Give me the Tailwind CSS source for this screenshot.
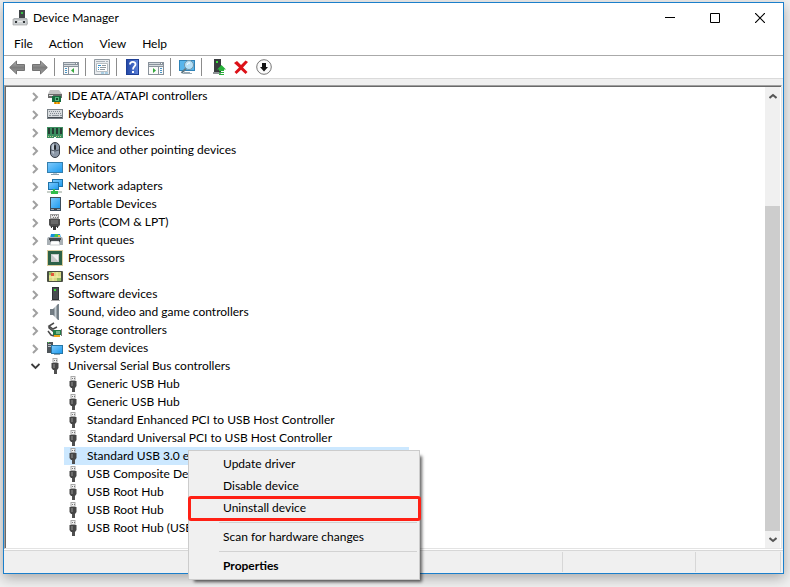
<!DOCTYPE html>
<html lang="en">
<head>
<meta charset="utf-8">
<title>Device Manager</title>
<script src="https://cdn.jsdelivr.net/npm/@tailwindcss/browser@4"></script>
</head>
<body class="h-screen overflow-hidden bg-[#f0f0f0] pt-[2px] pr-[6px] pb-[13px] pl-[3px] font-['Lato','Open_Sans',sans-serif] text-[12px] leading-[18px] text-black">

<svg class="absolute size-0" aria-hidden="true">
  <defs>
    <linearGradient id="blue" x1="0" y1="0" x2="1" y2="1"><stop offset="0" stop-color="#7cc8fb"/><stop offset="1" stop-color="#1e9cf0"/></linearGradient>
    <linearGradient id="arrow" x1="0" y1="0" x2="0" y2="1"><stop offset="0" stop-color="#b5b5b5"/><stop offset=".5" stop-color="#7d7d7d"/><stop offset="1" stop-color="#a2a2a2"/></linearGradient>
    <linearGradient id="steel" x1="0" y1="0" x2="1" y2="0"><stop offset="0" stop-color="#59636b"/><stop offset=".5" stop-color="#c3ccd2"/><stop offset="1" stop-color="#5e686f"/></linearGradient>
    <linearGradient id="help" x1="0" y1="0" x2="1" y2="0"><stop offset="0" stop-color="#2449a8"/><stop offset="1" stop-color="#5b80d8"/></linearGradient>
    <symbol id="chevron" viewBox="0 0 8 12"><path d="M2 2l4 4-4 4" fill="none" stroke="#a0a0a0" stroke-width="2"/></symbol>
    <symbol id="usb" viewBox="0 0 16 16">
      <path d="M5.500 0h5v5h-5z" fill="#a9a9a9"/><path d="M6.500 1h3v3h-3z" fill="#f2f2f2"/><path d="M7 2h1v1H7zM9 2h1v1H9z" fill="#777"/>
      <path d="M4.500 5h7v5l-1.500 2H6l-1.500-2z" fill="#464646"/><path d="M6 6h2v4H6z" fill="#6e6e6e"/><path d="M7 12h3v4H7z" fill="#505050"/>
    </symbol>
    <symbol id="ide" viewBox="0 0 16 16">
      <path d="M3 1h9l3 4H1z" fill="#c4c4c4"/><path d="M1 5h14v4H1z" fill="#6b6b6b"/><path d="M2 6h4v1H2z" fill="#ddd"/>
      <path d="M5 7h9v6H5z" fill="#156b3d"/><path d="M8 8h4v4H8z" fill="#55b77d"/><path d="M9 9h2v2H9z" fill="#164b2d"/><path d="M7 13h6v2H7z" fill="#f0ac14"/><path d="M8 13h1v2H8zM11 13h1v2h-1z" fill="#dc7900"/>
    </symbol>
    <symbol id="keyboard" viewBox="0 0 16 16">
      <path d="M0 3h16v10H0z" fill="#7a8288"/><path d="M1 4h14v7H1z" fill="#d8dcdf"/><path d="M1 11h14v1H1z" fill="#454b51"/>
      <path d="M2 5.500h12M3 7.500h12" stroke="#838b92" stroke-dasharray="1 1"/><path d="M2 9.500h2m1 0h7m1 0h2" stroke="#8d959b"/>
    </symbol>
    <symbol id="memory" viewBox="0 0 16 16">
      <path d="M0 3h16v11H9v-1H7v1H0z" fill="#3c8f60"/><path d="M1 4h2v6H1zM5 4h2v6H5zM9 4h2v6H9zM13 4h2v6h-2z" fill="#263e34"/><path d="M1 12.500h5m3 0h6" stroke="#c0c98a" stroke-dasharray="1 1"/>
    </symbol>
    <symbol id="mouse" viewBox="0 0 16 16"><rect x="3.500" y=".5" width="9" height="15" rx="4.500" fill="#8d99a8" stroke="#343a42"/><path d="M5 5q0-3 2-3v10q-2-1-2-4z" fill="#c3ccd6"/><path d="M8 1v4M4 8q4 2 8 0" fill="none" stroke="#4c5560"/><rect x="7" y="3" width="2" height="5" rx="1" fill="#23282e"/></symbol>
    <symbol id="monitor" viewBox="0 0 16 16"><path d="M0 2h16v11H0z" fill="#347fae"/><path d="M1 3h14v9H1z" fill="url(#blue)"/><path d="M6 13h4v1H6z" fill="#bccbd4"/><path d="M4 14h8v1H4z" fill="#8ba1b0"/></symbol>
    <symbol id="network" viewBox="0 0 16 16"><path d="M5 1h11v8H5z" fill="#1e72a8"/><path d="M6 2h9v6H6z" fill="url(#blue)"/><path d="M1 4h11v8H1z" fill="#1e72a8"/><path d="M2 5h9v6H2z" fill="url(#blue)"/><path d="M0 13h15v2H0z" fill="#c8cfc9"/><path d="M6 11h2v2h3v3H4v-3h2z" fill="#30bd4b"/></symbol>
    <symbol id="portable" viewBox="0 0 16 16"><path d="M3 1h11v14H3z" fill="#3d4e5c"/><path d="M4 2h9v10H4z" fill="url(#blue)"/><path d="M4 13h9v1H4z" fill="#9aa7b1"/><path d="M7 13h3v1H7z" fill="#444"/></symbol>
    <symbol id="port" viewBox="0 0 16 16"><path d="M3 0h9v5H3z" fill="#9e9e9e"/><path d="M4 1h7v3H4z" fill="#e4e4e4"/><path d="M5 1.500h6M6 3.500h5" stroke="#777" stroke-dasharray="1 1"/><path d="M2 5h11v6l-2 2H4l-2-2z" fill="#4e4e4e"/><path d="M4 7h7M4 9h7" stroke="#848484"/><path d="M4 12h1v2H4zM6 12h3v4H6zM10 12h1v2h-1z" fill="#383838"/></symbol>
    <symbol id="printer" viewBox="0 0 16 16"><path d="M4 2h9l1 4H3z" fill="#1590dd"/><path d="M8 2h3v3H7z" fill="#45c64d"/><path d="M11 3h2v2h-2z" fill="#f0c03a"/><path d="M1 5h14l1 2v6H0V7z" fill="#a9b0b5"/><path d="M2 6h12v2H2z" fill="#454b50"/><path d="M3 8h10v2H3z" fill="#292e32"/><path d="M4 9h8l1 4H3z" fill="#fff" stroke="#9ba1a5" stroke-width=".5"/></symbol>
    <symbol id="processor" viewBox="0 0 16 16"><rect x=".5" y=".5" width="15" height="15" fill="none" stroke="#b89c3c" stroke-dasharray="1 1"/><path d="M1 1h14v14H1z" fill="#2d6147"/><path d="M4 4h8v8H4z" fill="#c8c8c8"/><path d="M5 5h6v6z" fill="#f1f1f1"/></symbol>
    <symbol id="sensor" viewBox="0 0 16 16"><rect y="3" width="16" height="11" rx="1" fill="#4b5043"/><path d="M2 4h12v9H2z" fill="#d8dc86"/><path d="M2 4h4v3H2zM10 10h4v3h-4z" fill="#93bd64"/><path d="M6 4v9M2 9h12M10 4v5" stroke="#f9efac"/><path d="M4 5h3v3H4z" fill="#e4583b"/></symbol>
    <symbol id="software" viewBox="0 0 16 16"><path d="M5 1h7v13H5z" fill="#303336"/><path d="M6 2h5v11H6z" fill="#484c50"/><path d="M7 3h2v2H7z" fill="#3dde3c"/><path d="M4 14h9v1H4z" fill="#a5a5a5"/></symbol>
    <symbol id="sound" viewBox="0 0 16 16"><path d="M3 5h3v6H3z" fill="#737d84"/><path d="M6 5l5-5v16l-5-5z" fill="url(#steel)"/><path d="M11.500 0v16" stroke="#78848c"/></symbol>
    <symbol id="storage" viewBox="0 0 16 16"><path d="M7 1L2 4l4 3 4-2M2 4v2l5 4M1 9l3 4 3 1" fill="none" stroke="#4b4b4b" stroke-width="1.500"/><path d="M6 8h9v5H6z" fill="#247b47"/><path d="M9 9h4v3H9z" fill="#74b78d"/><path d="M14 7h1v7h-1z" fill="#777"/><path d="M7 13h6v2H7z" fill="#eba51c"/></symbol>
    <symbol id="system" viewBox="0 0 16 16"><path d="M0 2h6v11H0z" fill="#4f555a"/><path d="M1 4h3v1H1zM1 6h3v1H1z" fill="#b8bfc4"/><path d="M1 2h1v1H1z" fill="#44df45"/><path d="M4 5h12v9H4z" fill="#2676a6"/><path d="M5 6h10v7H5z" fill="url(#blue)"/><path d="M7 14h6v1H7z" fill="#93a3ae"/></symbol>
  </defs>
</svg>

<main class="flex h-full flex-col border border-[#1b7fcb] bg-white shadow-[0_4px_12px_rgba(0,0,0,0.3)]">
  <header class="flex h-[30px] shrink-0 items-center pl-2">
    <svg class="size-4" viewBox="0 0 16 16"><path d="M7 0h6v9H7z" fill="#3f4346"/><path d="M9 2h2v2H9z" fill="#37bf44"/><path d="M2 8h13l1 6H1z" fill="#b9bfc3"/><path d="M1 9h14v6H1z" fill="#ced2d4" stroke="#999" stroke-width=".6"/><path d="M3 11h2v2H3zM11 11h2v2h-2z" fill="#34383b"/><path d="M6 11h4v1H6z" fill="#eee"/></svg>
    <h1 class="pl-[5px]">Device Manager</h1>
    <div class="ml-auto flex pr-[1px]">
      <button class="flex h-7 w-[45px] items-center justify-center" aria-label="Minimize"><svg class="size-[10px]" viewBox="0 0 10 10"><path d="M0 4.500h10" stroke="#000"/></svg></button>
      <button class="flex h-7 w-[45px] items-center justify-center" aria-label="Maximize"><svg class="size-[10px]" viewBox="0 0 10 10"><path d="M.5.500h9v9h-9z" fill="none" stroke="#000"/></svg></button>
      <button class="flex h-7 w-[45px] items-center justify-center" aria-label="Close"><svg class="size-[10px]" viewBox="0 0 10 10"><path d="M0 0l10 10M10 0L0 10" stroke="#000" stroke-width="1.200"/></svg></button>
    </div>
  </header>

  <nav class="flex h-[23px] shrink-0 items-center gap-4 border-b border-[#aaa] pl-[10px]" aria-label="Menu bar">
    <button>File</button><button>Action</button><button>View</button><button>Help</button>
  </nav>

  <div class="flex h-[23px] shrink-0 items-center border-b border-[#dadada] pl-[5px]" role="toolbar" aria-label="Tools">
    <button aria-label="Back"><svg class="size-4" viewBox="0 0 16 16"><path d="M.700 8.500L7.500 2v3.500h8v6h-8V15z" fill="url(#arrow)" stroke="#737373"/></svg></button>
    <button class="ml-[7px]" aria-label="Forward"><svg class="size-4" viewBox="0 0 16 16"><path d="M15.300 8.500L8.500 2v3.500h-8v6h8V15z" fill="url(#arrow)" stroke="#737373"/></svg></button>
    <span class="ml-[6px] h-[18px] w-px bg-[#8c8c8c]"></span>
    <button class="ml-2" aria-label="Show or hide console tree"><svg class="size-4" viewBox="0 0 16 16"><path d="M0 3h16v13H0z" fill="#89929b"/><path d="M1 4h11v1H1zM1 6h14v1H1z" fill="#d5dade"/><path d="M13 4h1v1h-1z" fill="#fff"/><path d="M1 8h4v7H1zM6 8h9v7H6z" fill="#fafafa"/><path d="M2 9.500h2M2 11.500h2M2 13.500h2" stroke="#4994c4"/><path d="M11 9v5l-3-2.500z" fill="#35a83b"/></svg></button>
    <span class="ml-[6px] h-[18px] w-px bg-[#8c8c8c]"></span>
    <button class="ml-2" aria-label="Properties"><svg class="size-4" viewBox="0 0 16 16"><path d="M.5.500h15v15H.5z" fill="#e9ecef" stroke="#929aa1"/><path d="M2 2.500h9M12 2.500h2" stroke="#a9b2ba"/><path d="M2.500 4.500h11v8h-11z" fill="#fff" stroke="#b8bec2"/><path d="M4 6.500h3M4 8.500h1M4 10.500h1" stroke="#3293cf"/><path d="M8 6.500h4M6 8.500h6M6 10.500h5" stroke="#8f989f"/><path d="M7 14h3M11 14h3" stroke="#6cb1d9"/></svg></button>
    <span class="ml-[6px] h-[18px] w-px bg-[#8c8c8c]"></span>
    <button class="ml-2" aria-label="Help"><svg class="size-4" viewBox="0 0 16 16"><path d="M1 0h13v16H1z" fill="#1e3f95"/><path d="M2 1h11v14H2z" fill="url(#help)"/><path d="M5 5.500c0-3.500 5.500-3.500 5.500-.2C10.500 7.500 8 7.500 8 10.500" fill="none" stroke="#fff" stroke-width="1.800"/><path d="M7 12h2v2H7z" fill="#fff"/></svg></button>
    <button class="ml-[7px]" aria-label="Show or hide action pane"><svg class="size-4" viewBox="0 0 16 16"><path d="M0 3h16v13H0z" fill="#89929b"/><path d="M1 4h11v1H1zM1 6h14v1H1z" fill="#d5dade"/><path d="M13 4h1v1h-1z" fill="#fff"/><path d="M1 8h9v7H1zM11 8h4v7h-4z" fill="#fafafa"/><path d="M12 9.500h2M12 11.500h2M12 13.500h2" stroke="#4994c4"/><path d="M5 9v5l3-2.500z" fill="#35a83b"/></svg></button>
    <span class="ml-[6px] h-[18px] w-px bg-[#8c8c8c]"></span>
    <button class="ml-2" aria-label="Scan for hardware changes"><svg class="size-4" viewBox="0 0 16 16"><path d="M0 1h16v11H0z" fill="#2f83b8"/><path d="M1 2h14v9H1z" fill="#58b5eb"/><path d="M5 13h6v1H5zM4 14h9v1H4z" fill="#9aaab4"/><path d="M7 9.500L2.500 14" stroke="#607884" stroke-width="2"/><circle cx="10" cy="6" r="4.500" fill="#b5e0f7" stroke="#7195a8"/><path d="M8 6q1-3 3-2" fill="none" stroke="#fff"/></svg></button>
    <span class="ml-[6px] h-[18px] w-px bg-[#8c8c8c]"></span>
    <button class="ml-[9px]" aria-label="Update driver"><svg class="size-4" viewBox="0 0 16 16"><path d="M3 0h7v13H3z" fill="#383b3e"/><path d="M5 2h2v2H5z" fill="#3ce13d"/><path d="M2 13h8v2H2z" fill="#8e9396"/><path d="M10.500 6l4.500 4.500h-2V12H8v-1.500H6z" fill="#27b139"/><path d="M8 13h5v1H8zM8 15h5v1H8z" fill="#27b139"/></svg></button>
    <button class="ml-[6px]" aria-label="Uninstall device"><svg class="size-4" viewBox="0 0 16 16"><path d="M1 4l3-2 4 4 4.500-4.500L15 3l-5 5.500 4.500 4.500-2 2L8 10.800 3.500 15l-2-2L6 8.500z" fill="#dc1118"/></svg></button>
    <button class="ml-[7px]" aria-label="Disable device"><svg class="size-4" viewBox="0 0 16 16"><circle cx="8" cy="8" r="7.300" fill="#fafafa" stroke="#777"/><path d="M6 4h4v4h2l-4 4.500L4 8h2z" fill="#111"/></svg></button>
  </div>

  <section class="flex min-h-0 flex-1 flex-col bg-[#f0f0f0] pt-[6px]">
   <div class="mr-px flex min-h-0 flex-1 border-t border-r border-b border-l border-t-[#a0a0a0] border-r-[#e3e3e3] border-b-[#e3e3e3] border-l-[#a0a0a0] bg-white">
    <div class="flex min-w-0 flex-1 border-t border-l border-[#696969] pr-px">
      <ul class="min-w-0 flex-1 overflow-hidden" role="tree" aria-label="Devices">
        <li class="flex h-[18px] items-center pl-[25px]" role="treeitem"><svg class="mt-[2px] h-3 w-2"><use href="#chevron"/></svg><svg class="mt-[2px] mr-[5px] ml-2 size-4"><use href="#ide"/></svg>IDE ATA/ATAPI controllers</li>
        <li class="flex h-[18px] items-center pl-[25px]" role="treeitem"><svg class="mt-[2px] h-3 w-2"><use href="#chevron"/></svg><svg class="mr-[5px] ml-2 size-4"><use href="#keyboard"/></svg>Keyboards</li>
        <li class="flex h-[18px] items-center pl-[25px]" role="treeitem"><svg class="mt-[2px] h-3 w-2"><use href="#chevron"/></svg><svg class="mr-[5px] ml-2 size-4"><use href="#memory"/></svg>Memory devices</li>
        <li class="flex h-[18px] items-center pl-[25px]" role="treeitem"><svg class="mt-[2px] h-3 w-2"><use href="#chevron"/></svg><svg class="mr-[5px] ml-2 size-4"><use href="#mouse"/></svg>Mice and other pointing devices</li>
        <li class="flex h-[18px] items-center pl-[25px]" role="treeitem"><svg class="mt-[2px] h-3 w-2"><use href="#chevron"/></svg><svg class="mr-[5px] ml-2 size-4"><use href="#monitor"/></svg>Monitors</li>
        <li class="flex h-[18px] items-center pl-[25px]" role="treeitem"><svg class="mt-[2px] h-3 w-2"><use href="#chevron"/></svg><svg class="mr-[5px] ml-2 size-4"><use href="#network"/></svg>Network adapters</li>
        <li class="flex h-[18px] items-center pl-[25px]" role="treeitem"><svg class="mt-[2px] h-3 w-2"><use href="#chevron"/></svg><svg class="mr-[5px] ml-2 size-4"><use href="#portable"/></svg>Portable Devices</li>
        <li class="flex h-[18px] items-center pl-[25px]" role="treeitem"><svg class="mt-[2px] h-3 w-2"><use href="#chevron"/></svg><svg class="mr-[5px] ml-2 size-4"><use href="#port"/></svg>Ports (COM &amp; LPT)</li>
        <li class="flex h-[18px] items-center pl-[25px]" role="treeitem"><svg class="mt-[2px] h-3 w-2"><use href="#chevron"/></svg><svg class="mr-[5px] ml-2 size-4"><use href="#printer"/></svg>Print queues</li>
        <li class="flex h-[18px] items-center pl-[25px]" role="treeitem"><svg class="mt-[2px] h-3 w-2"><use href="#chevron"/></svg><svg class="mr-[5px] ml-2 size-4"><use href="#processor"/></svg>Processors</li>
        <li class="flex h-[18px] items-center pl-[25px]" role="treeitem"><svg class="mt-[2px] h-3 w-2"><use href="#chevron"/></svg><svg class="mr-[5px] ml-2 size-4"><use href="#sensor"/></svg>Sensors</li>
        <li class="flex h-[18px] items-center pl-[25px]" role="treeitem"><svg class="mt-[2px] h-3 w-2"><use href="#chevron"/></svg><svg class="mr-[5px] ml-2 size-4"><use href="#software"/></svg>Software devices</li>
        <li class="flex h-[18px] items-center pl-[25px]" role="treeitem"><svg class="mt-[2px] h-3 w-2"><use href="#chevron"/></svg><svg class="mr-[5px] ml-2 size-4"><use href="#sound"/></svg>Sound, video and game controllers</li>
        <li class="flex h-[18px] items-center pl-[25px]" role="treeitem"><svg class="mt-[2px] h-3 w-2"><use href="#chevron"/></svg><svg class="mr-[5px] ml-2 size-4"><use href="#storage"/></svg>Storage controllers</li>
        <li class="flex h-[18px] items-center pl-[25px]" role="treeitem"><svg class="mt-[2px] h-3 w-2"><use href="#chevron"/></svg><svg class="mr-[5px] ml-2 size-4"><use href="#system"/></svg>System devices</li>
        <li role="treeitem" aria-expanded="true">
          <div class="flex h-[18px] items-center pl-6"><svg class="h-2 w-[10px]" viewBox="0 0 10 8"><path d="M1.500 2l4 4 4-4" fill="none" stroke="#3c3c3c" stroke-width="1.800"/></svg><svg class="mr-[5px] ml-[7px] size-4"><use href="#usb"/></svg>Universal Serial Bus controllers</div>
          <ul class="w-[403px] pl-[58px]" role="group">
            <li class="flex h-[18px] items-center" role="treeitem"><svg class="mr-[6px] ml-px size-4"><use href="#usb"/></svg>Generic USB Hub</li>
            <li class="flex h-[18px] items-center" role="treeitem"><svg class="mr-[6px] ml-px size-4"><use href="#usb"/></svg>Generic USB Hub</li>
            <li class="flex h-[18px] items-center" role="treeitem"><svg class="mr-[6px] ml-px size-4"><use href="#usb"/></svg>Standard Enhanced PCI to USB Host Controller</li>
            <li class="flex h-[18px] items-center" role="treeitem"><svg class="mr-[6px] ml-px size-4"><use href="#usb"/></svg>Standard Universal PCI to USB Host Controller</li>
            <li class="flex h-[18px] items-center bg-[#cce8ff]" role="treeitem" aria-selected="true"><svg class="mr-[6px] ml-px size-4"><use href="#usb"/></svg>Standard USB 3.0 eX</li>
            <li class="flex h-[18px] items-center" role="treeitem"><svg class="mr-[6px] ml-px size-4"><use href="#usb"/></svg>USB Composite Dev</li>
            <li class="flex h-[18px] items-center" role="treeitem"><svg class="mr-[6px] ml-px size-4"><use href="#usb"/></svg>USB Root Hub</li>
            <li class="flex h-[18px] items-center" role="treeitem"><svg class="mr-[6px] ml-px size-4"><use href="#usb"/></svg>USB Root Hub</li>
            <li class="flex h-[18px] items-center" role="treeitem"><svg class="mr-[6px] ml-px size-4"><use href="#usb"/></svg>USB Root Hub (USB</li>
          </ul>
        </li>
      </ul>
      <div class="flex w-[15px] flex-col bg-[#f0f0f0]">
        <button class="flex h-[17px] items-center justify-center" aria-label="Scroll up"><svg class="h-[6px] w-2" viewBox="0 0 8 6"><path d="M.5 5l3.500-3 3.500 3" fill="none" stroke="#555" stroke-width="2"/></svg></button>
        <div class="flex flex-1 flex-col justify-end"><div class="h-[76%] bg-[#cdcdcd]"></div></div>
        <button class="flex h-[17px] items-center justify-center" aria-label="Scroll down"><svg class="h-[6px] w-2" viewBox="0 0 8 6"><path d="M.5 1l3.500 3 3.500-3" fill="none" stroke="#555" stroke-width="2"/></svg></button>
      </div>
    </div>
   </div>
  </section>

  <footer class="h-6 shrink-0 bg-white pt-px">
    <div class="flex h-full justify-end border-t border-[#d7d7d7] bg-[#f0f0f0] pt-px pr-[2px] pb-px">
      <span class="w-[133px] border-l border-[#d7d7d7]"></span>
      <span class="w-[86px] border-r border-l border-[#d7d7d7]"></span>
    </div>
  </footer>
</main>

<div class="absolute top-[450px] left-[188px] w-[232px] border border-[#ccc] bg-[#f0f0f0] py-[2px] shadow-[4px_4px_3px_-2px_rgba(0,0,0,0.6)]" role="menu">
  <button class="block h-[22px] w-full pl-[34px] text-left" role="menuitem">Update driver</button>
  <button class="block h-[22px] w-full pl-[34px] text-left" role="menuitem">Disable device</button>
  <button class="relative block h-[22px] w-full pl-[34px] text-left" role="menuitem">Uninstall device<span class="absolute -top-px -right-[2px] -bottom-[2px] -left-px rounded-[3px] border-3 border-[#ff2015]"></span></button>
  <hr class="my-[3px] mr-[2px] ml-[30px] border-[#d2d2d2]">
  <button class="block h-[22px] w-full pl-[34px] text-left" role="menuitem">Scan for hardware changes</button>
  <hr class="my-[3px] mr-[2px] ml-[30px] border-[#d2d2d2]">
  <button class="block h-[22px] w-full pl-[34px] text-left font-bold" role="menuitem">Properties</button>
</div>
</body>
</html>
